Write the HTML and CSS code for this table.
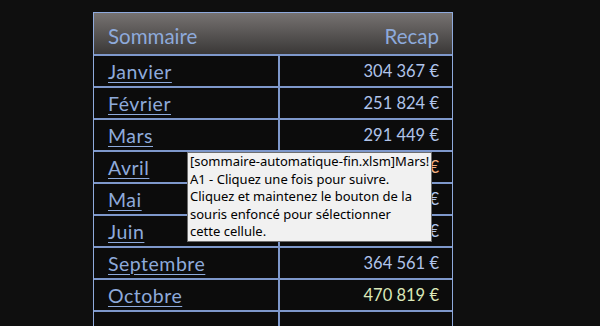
FILE: index.html
```html
<!DOCTYPE html>
<html lang="fr">
<head>
<meta charset="utf-8">
<title>Sommaire</title>
<link rel="stylesheet" href="styles.css">
</head>
<body>
<div class="sheet">
  <div class="tbl">
    <div class="row head">
      <div class="cell left">Sommaire</div>
      <div class="cell right">Recap</div>
    </div>
    <div class="row"><div class="cell left"><a class="link">Janvier</a></div><div class="cell right num">304 367 €</div></div>
    <div class="row"><div class="cell left"><a class="link">Février</a></div><div class="cell right num">251 824 €</div></div>
    <div class="row"><div class="cell left"><a class="link">Mars</a></div><div class="cell right num">291 449 €</div></div>
    <div class="row"><div class="cell left"><a class="link">Avril</a></div><div class="cell right num warn">€</div></div>
    <div class="row"><div class="cell left"><a class="link">Mai</a></div><div class="cell right num">€</div></div>
    <div class="row"><div class="cell left"><a class="link">Juin</a></div><div class="cell right num">€</div></div>
    <div class="row"><div class="cell left"><a class="link">Septembre</a></div><div class="cell right num">364 561 €</div></div>
    <div class="row"><div class="cell left"><a class="link">Octobre</a></div><div class="cell right num good">470 819 €</div></div>
    <div class="row last"><div class="cell left"></div><div class="cell right num"></div></div>
  </div>
  <div class="tooltip">
    <span class="line">[sommaire-automatique-fin.xlsm]Mars!</span>
    <span class="line">A1 - Cliquez une fois pour suivre.</span>
    <span class="line">Cliquez et maintenez le bouton de la</span>
    <span class="line">souris enfoncé pour sélectionner</span>
    <span class="line">cette cellule.</span>
  </div>
</div>
</body>
</html>
```

FILE: styles.css
```css
html, body {
  margin: 0;
  padding: 0;
  background: #0f0f0f;
  height: 100%;
  overflow: hidden;
}
.sheet {
  position: relative;
  padding: 12px 0 0 93px;
}
.tbl {
  width: 358px;
  border: 1px solid #8faadc;
  border-bottom: none;
  background: #0c0c0c;
  font-family: Lato, "Open Sans", sans-serif;
}
.row {
  display: grid;
  grid-template-columns: 186px 1fr;
  height: 30px;
  border-bottom: 2px solid #7e98cb;
}
.row.head {
  height: 41px;
  background: linear-gradient(#767271, #3a3837);
}
.row.last {
  height: 14px;
  border-bottom: none;
}
.cell {
  display: flex;
  align-items: center;
}
.left {
  padding-left: 14px;
  border-right: 2px solid #7e98cb;
}
.head .left { border-right: none; }
.right {
  justify-content: flex-end;
  padding-right: 13px;
}
.head .cell {
  color: #8eaadb;
  font-size: 20.5px;
  padding-top: 4px;
}
.link {
  color: #8eaadb;
  font-size: 19.5px;
  letter-spacing: 0.5px;
  text-decoration: underline;
  text-underline-offset: 3px;
  text-decoration-thickness: 1px;
}
.num {
  color: #b0c4ea;
  font-size: 16.5px;
}
.num.warn { color: #f4b183; }
.num.good { color: #dbe8b9; }
.tooltip {
  position: absolute;
  left: 187px;
  top: 152px;
  width: 240px;
  height: 88px;
  padding: 0 1px 0 2px;
  background: #f1f1f1;
  border: 1px solid #6d6d6d;
  font-family: "Noto Sans", "Open Sans", sans-serif;
  font-size: 13px;
  line-height: 17.6px;
  color: #000;
  white-space: nowrap;
}
.line { display: block; }
```
